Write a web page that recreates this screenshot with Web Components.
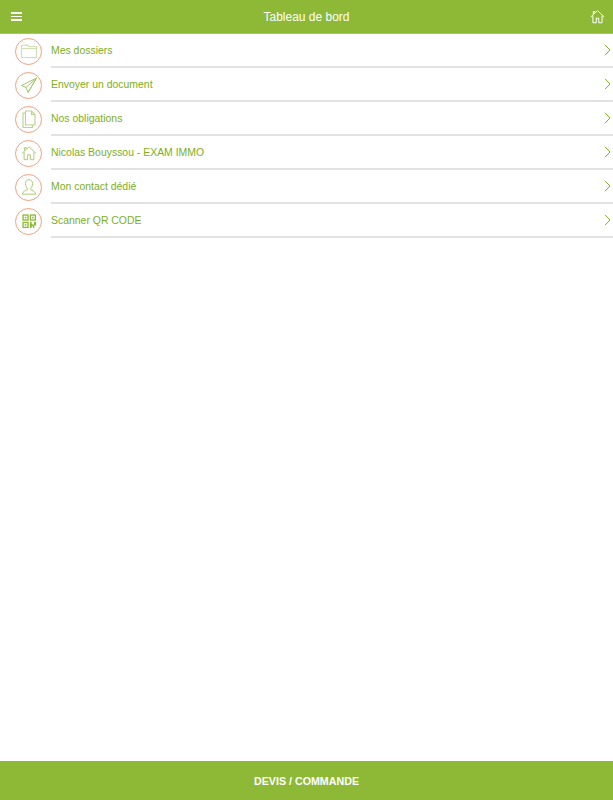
<!DOCTYPE html>
<html lang="fr">
<head>
<meta charset="utf-8">
<title>Tableau de bord</title>
<style>
  html, body { margin: 0; height: 100%; background: #fff; }
  body { font-family: "Liberation Sans", Arial, sans-serif; }
  app-shell { height: 800px; }
</style>
</head>
<body>
<app-shell>
  <top-bar slot="top" title-text="Tableau de bord"></top-bar>
  <menu-row icon="folder" label="Mes dossiers"></menu-row>
  <menu-row icon="send" label="Envoyer un document"></menu-row>
  <menu-row icon="doc" label="Nos obligations"></menu-row>
  <menu-row icon="house" label="Nicolas Bouyssou - EXAM IMMO"></menu-row>
  <menu-row icon="person" label="Mon contact dédié"></menu-row>
  <menu-row icon="qr" label="Scanner QR CODE"></menu-row>
  <bottom-button slot="bottom">DEVIS / COMMANDE</bottom-button>
</app-shell>

<script>
const HOUSE = `<path d="M1 9.5 9 2l8 7.5M3.5 8v8.5h4V11h3v5.5h4V8M4 6.600V3h2v1.700"/>`;

const ICON_SIZES = { folder: 18, send: 18, doc: 18, house: 16, person: 16, qr: 16 };

const ICONS = {
  folder: `<path stroke="#cfe0b4" stroke-width="1.2" fill="none" d="M1.500 3.500v12h15V4.500H8.500L7.500 3zM1.500 6.500h15"/>`,
  send: `<path stroke="#a6c96a" stroke-width="1" fill="none" d="M16.500 2 1.500 9.500l4.500 2L8 16.500zM16.500 2 6 11.500M16.500 2 8 16.500"/>`,
  doc: `<path stroke="#b9d48c" stroke-width="1.100" fill="none" d="M5.500 1h6l3.500 3.500V15H5.500zM11.500 1v3.500H15M5.500 3H3v14.500h9.500V15"/>`,
  house: `<g stroke="#acca74" stroke-width="1.100" fill="none">${HOUSE}</g>`,
  person: `<path stroke="#acca74" stroke-width="1.100" fill="none" d="M9 .8C6.400.8 5 2.700 5 5.200c0 2.300 1 4 2 5v1.900c-1 1-5.200 1.400-5.500 5h15c-.3-3.600-4.500-4-5.500-5v-1.900c1-1 2-2.700 2-5C13 2.700 11.600.8 9 .8z"/>`,
  qr: `<g fill="none" stroke="#8db936" stroke-width="1.500">
        <rect x="2.300" y="2.300" width="5.600" height="5.600"/>
        <rect x="10.600" y="2.300" width="5.600" height="5.600"/>
        <rect x="2.300" y="10.600" width="5.600" height="5.600"/>
      </g>
      <g fill="#8db936">
        <rect x="4.200" y="4.200" width="1.800" height="1.800"/>
        <rect x="12.500" y="4.200" width="1.800" height="1.800"/>
        <rect x="4.200" y="12.500" width="1.800" height="1.800"/>
        <path d="M10 10h2v2.200l2.500 1.300V10H17v4h-2v3h-1.500v-2H12v2h-2z"/>
      </g>`
};

customElements.define("app-shell", class extends HTMLElement {
  constructor() {
    super();
    this.attachShadow({ mode: "open" });
    this.shadowRoot.innerHTML = `
      <style>
        :host { display: flex; flex-direction: column; background: #fff; }
        .rows { flex: 1; display: flex; flex-direction: column; }
      </style>
      <slot name="top"></slot>
      <div class="rows"><slot></slot></div>
      <slot name="bottom"></slot>
    `;
  }
});

customElements.define("top-bar", class extends HTMLElement {
  constructor() {
    super();
    this.attachShadow({ mode: "open" });
    this.shadowRoot.innerHTML = `
      <style>
        :host {
          display: flex;
          align-items: center;
          justify-content: space-between;
          height: 33px;
          padding: 0 8px 0 11px;
          background: #8db936;
          border-bottom: 1px solid #a5cf3c;
          color: #fff;
          font-size: 12px;
        }
        .menu { display: flex; flex-direction: column; gap: 2px; width: 12px; }
        .menu i { display: block; width: 11px; height: 1.5px; background: #fff; }
        svg { display: block; fill: none; stroke: #fff; stroke-width: 1.200; }
      </style>
      <div class="menu"><i></i><i></i><i></i></div>
      <span class="title"></span>
      <svg width="15" height="15" viewBox="0 0 18 18">${HOUSE}</svg>
    `;
    this.shadowRoot.querySelector(".title").textContent = this.getAttribute("title-text");
  }
});

customElements.define("menu-row", class extends HTMLElement {
  constructor() {
    super();
    this.attachShadow({ mode: "open" });
    const icon = this.getAttribute("icon");
    const size = ICON_SIZES[icon];
    this.shadowRoot.innerHTML = `
      <style>
        :host { display: flex; align-items: center; height: 34px; padding-left: 15px; }
        .badge {
          box-sizing: border-box;
          flex: none;
          display: flex;
          align-items: center;
          justify-content: center;
          width: 27px;
          height: 27px;
          margin-right: 9px;
          border: 1px solid #f5a07a;
          border-radius: 50%;
        }
        .content {
          box-sizing: border-box;
          flex: 1;
          align-self: stretch;
          display: flex;
          align-items: center;
          justify-content: space-between;
          padding-right: 2px;
          border-bottom: 2px solid #e2e2e2;
          color: #7dae22;
          font-size: 10.45px;
        }
        svg { display: block; }
      </style>
      <div class="badge"><svg width="${size}" height="${size}" viewBox="0 0 18 18">${ICONS[icon]}</svg></div>
      <div class="content">
        <span class="label"></span>
        <svg width="7" height="12" viewBox="0 0 7 12" fill="none" stroke="#7dae22" stroke-width="1"><path d="M1 .8 6 6l-5 5.200"/></svg>
      </div>
    `;
    this.shadowRoot.querySelector(".label").textContent = this.getAttribute("label");
  }
});

customElements.define("bottom-button", class extends HTMLElement {
  constructor() {
    super();
    this.attachShadow({ mode: "open" });
    this.shadowRoot.innerHTML = `
      <style>
        :host {
          display: flex;
          align-items: center;
          justify-content: center;
          height: 39px;
          background: #8db936;
          color: #fff;
          font-size: 10.7px;
          font-weight: bold;
        }
      </style>
      <slot></slot>
    `;
  }
});
</script>
</body>
</html>
